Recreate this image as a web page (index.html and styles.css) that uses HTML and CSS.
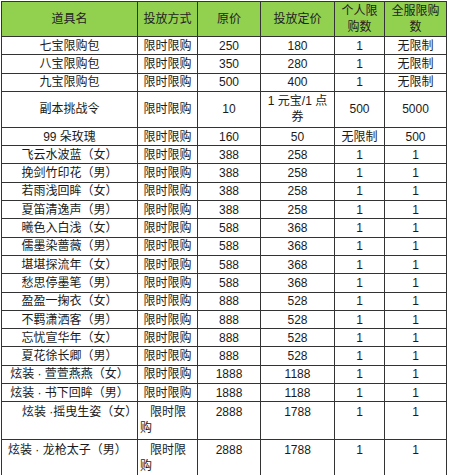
FILE: index.html
```html
<!DOCTYPE html>
<html lang="zh-CN">
<head>
<meta charset="utf-8">
<title>道具限购</title>
<link rel="stylesheet" href="styles.css">
</head>
<body>
<table class="shop">
  <colgroup>
    <col class="c-name"><col class="c-mode"><col class="c-orig"><col class="c-price"><col class="c-per"><col class="c-all">
  </colgroup>
  <thead>
    <tr class="head">
      <th>道具名</th><th>投放方式</th><th>原价</th><th>投放定价</th><th>个人限购数</th><th>全服限购数</th>
    </tr>
  </thead>
  <tbody>
    <tr class="r"><td>七宝限购包</td><td>限时限购</td><td>250</td><td>180</td><td>1</td><td>无限制</td></tr>
    <tr class="r"><td>八宝限购包</td><td>限时限购</td><td>350</td><td>280</td><td>1</td><td>无限制</td></tr>
    <tr class="r"><td>九宝限购包</td><td>限时限购</td><td>500</td><td>400</td><td>1</td><td>无限制</td></tr>
    <tr class="r2"><td>副本挑战令</td><td>限时限购</td><td>10</td><td>1 元宝/1 点券</td><td>500</td><td>5000</td></tr>
    <tr class="r"><td>99 朵玫瑰</td><td>限时限购</td><td>160</td><td>50</td><td>无限制</td><td>500</td></tr>
    <tr class="r"><td>飞云水波蓝（女）</td><td>限时限购</td><td>388</td><td>258</td><td>1</td><td>1</td></tr>
    <tr class="r"><td>挽剑竹印花（男）</td><td>限时限购</td><td>388</td><td>258</td><td>1</td><td>1</td></tr>
    <tr class="r"><td>若雨浅回眸（女）</td><td>限时限购</td><td>388</td><td>258</td><td>1</td><td>1</td></tr>
    <tr class="r"><td>夏笛清逸声（男）</td><td>限时限购</td><td>388</td><td>258</td><td>1</td><td>1</td></tr>
    <tr class="r"><td>曦色入白浅（女）</td><td>限时限购</td><td>588</td><td>368</td><td>1</td><td>1</td></tr>
    <tr class="r"><td>儒墨染蔷薇（男）</td><td>限时限购</td><td>588</td><td>368</td><td>1</td><td>1</td></tr>
    <tr class="r"><td>堪堪探流年（女）</td><td>限时限购</td><td>588</td><td>368</td><td>1</td><td>1</td></tr>
    <tr class="r"><td>愁思停墨笔（男）</td><td>限时限购</td><td>588</td><td>368</td><td>1</td><td>1</td></tr>
    <tr class="r"><td>盈盈一掬衣（女）</td><td>限时限购</td><td>888</td><td>528</td><td>1</td><td>1</td></tr>
    <tr class="r"><td>不羁潇洒客（男）</td><td>限时限购</td><td>888</td><td>528</td><td>1</td><td>1</td></tr>
    <tr class="r"><td>忘忧宣华年（女）</td><td>限时限购</td><td>888</td><td>528</td><td>1</td><td>1</td></tr>
    <tr class="r"><td>夏花徐长卿（男）</td><td>限时限购</td><td>888</td><td>528</td><td>1</td><td>1</td></tr>
    <tr class="r"><td>炫装 · 萱萱燕燕（女）</td><td>限时限购</td><td>1888</td><td>1188</td><td>1</td><td>1</td></tr>
    <tr class="r"><td>炫装 · 书下回眸（男）</td><td>限时限购</td><td>1888</td><td>1188</td><td>1</td><td>1</td></tr>
    <tr class="rt"><td class="ind-l">炫装 ·摇曳生姿（女）</td><td class="wrap">限时限购</td><td>2888</td><td>1788</td><td>1</td><td>1</td></tr>
    <tr class="rt last"><td class="ind-s">炫装 · 龙枪太子（男）</td><td class="wrap">限时限购</td><td>2888</td><td>1788</td><td>1</td><td>1</td></tr>
  </tbody>
</table>
</body>
</html>
```
FILE: styles.css
```css
html, body {
  margin: 0;
  padding: 0;
  background: #ffffff;
}

body {
  padding: 1px 0 0 1px;
  font-family: "Liberation Sans", "Noto Sans CJK SC", sans-serif;
  font-size: 12px;
  color: #1a1a1a;
}

.shop {
  border-collapse: collapse;
  table-layout: fixed;
  width: 445px;
}

.c-name { width: 136px; }
.c-mode { width: 60px; }
.c-orig { width: 63px; }
.c-price { width: 74px; }
.c-per { width: 50px; }
.c-all { width: 62px; }

.shop th,
.shop td {
  border: 1px solid #333333;
  padding: 0 1px;
  text-align: center;
  vertical-align: middle;
  line-height: 16px;
  font-weight: normal;
  overflow: hidden;
}

.head th {
  background: #92d050;
  height: 34px;
  color: #222222;
}

.r td {
  height: 17.3px;
}

.r2 td {
  height: 35px;
}

.rt td {
  height: 35px;
  vertical-align: top;
  padding-top: 2px;
}

.rt.last td {
  height: 34px;
}

.rt td.wrap {
  text-align: left;
  text-indent: 10px;
  padding-left: 2px;
}

.rt td.ind-l {
  text-align: left;
  padding-left: 20px;
  white-space: nowrap;
}

.rt td.ind-s {
  text-align: left;
  padding-left: 6px;
  white-space: nowrap;
}
```
